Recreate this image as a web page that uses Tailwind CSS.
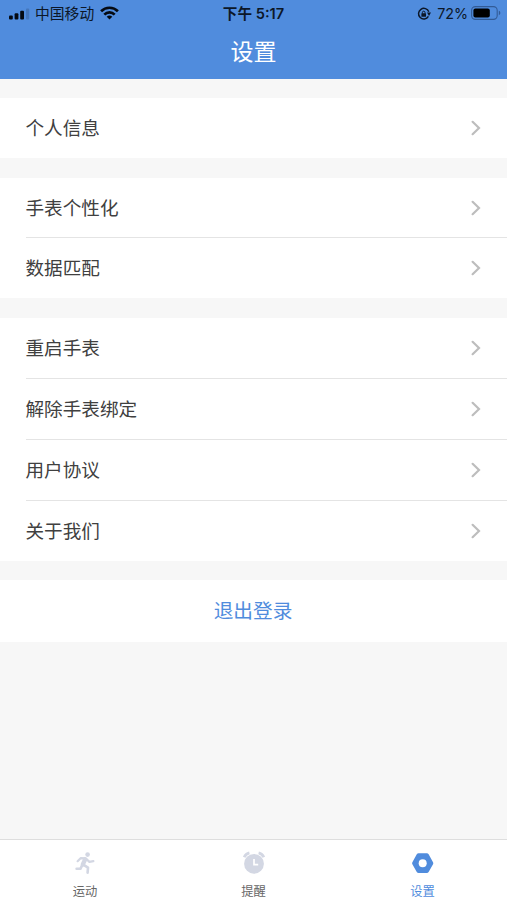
<!DOCTYPE html>
<html lang="zh-CN">
<head>
  <meta charset="UTF-8" />
  <meta name="viewport" content="width=device-width, initial-scale=1.0" />
  <title>设置</title>
  <script src="https://cdn.jsdelivr.net/npm/@tailwindcss/browser@4"></script>
</head>
<body class="bg-[#f7f7f7] font-['Inter','Noto_Sans_CJK_SC',sans-serif] text-[#404040]">
  <!-- Chevron shared by every row -->
  <svg class="hidden">
    <symbol id="chevron" viewBox="0 0 10 16">
      <path d="M1.6 1.8 8 8l-6.4 6.2" fill="none" stroke="#bdbdbd" stroke-width="2.2" stroke-linecap="round" />
    </symbol>
  </svg>

  <div class="flex flex-col h-[900px] overflow-hidden">
    <header class="h-[79px] shrink-0 bg-[#508cdd]">
      <!-- Status bar -->
      <div class="grid grid-cols-3 items-center h-[27px] text-[#0c1728] leading-none">
        <div class="flex items-center pl-[9px]">
          <svg class="mt-px w-[21px] h-3" viewBox="0 0 21 12">
            <rect x="0" y="7.5" width="3.8" height="4" rx="1" fill="#050a12" />
            <rect x="5.6" y="5.3" width="3.8" height="6.2" rx="1" fill="#050a12" />
            <rect x="11.2" y="2.8" width="3.8" height="8.7" rx="1" fill="#050a12" />
            <rect x="17" y="0.5" width="3.2" height="11" rx="1" fill="#4476bb" />
          </svg>
          <span class="ml-[5px] pt-[2px] text-[14.8px] whitespace-nowrap">中国移动</span>
          <svg class="ml-[6px] w-[19px] h-[14px]" viewBox="0 0 19 14" fill="none" stroke="#050a12" stroke-width="2.7">
            <path d="M1.1 5.2a12 12 0 0 1 16.8 0" />
            <path d="M4.3 8.6a7.4 7.4 0 0 1 10.4 0" />
            <path d="M9.5 13.6 6.7 10.8a4 4 0 0 1 5.6 0z" fill="#050a12" stroke="none" />
          </svg>
        </div>
        <div class="pt-[2px] text-center text-[14.6px] font-semibold whitespace-nowrap">下午 5:17</div>
        <div class="flex items-center justify-end pr-[6px]">
          <svg class="mt-px w-[14px] h-[14px]" viewBox="0 0 14 14" fill="none" stroke="#0c1728">
            <path d="M11.4 9.4A5.3 5.3 0 1 1 11.8 4.8" stroke-width="1.5" />
            <path d="M10 5.6h4l-2 3.4z" fill="#0c1728" stroke="none" />
            <path d="M5.4 6.6V5.5a1.3 1.3 0 0 1 2.6 0v1.1" stroke-width="1" />
            <rect x="4.4" y="6.2" width="4.6" height="3.6" rx=".5" fill="#0c1728" stroke="none" />
          </svg>
          <span class="ml-[6px] pt-px text-[14.3px]">72%</span>
          <svg class="ml-[3px] w-[30px] h-[14px]" viewBox="0 0 30 14">
            <rect x=".6" y=".6" width="25.6" height="12.8" rx="3.8" fill="none" stroke="#325b96" stroke-width="1.1" />
            <rect x="2.4" y="2.4" width="16.4" height="9.2" rx="2" fill="#000" />
            <path d="M27.8 4.8c2 .6 2 3.8 0 4.4z" fill="#325b96" />
          </svg>
        </div>
      </div>
      <h1 class="h-[49px] pt-px text-center text-[23px] leading-[49px] text-white">设置</h1>
    </header>

    <main class="flex-1 text-[18.6px]">
      <section class="mt-[19px] bg-white pl-[25.5px]">
        <a class="flex items-center justify-between h-[60px] pr-[26px]">
          <span class="pt-[2px]">个人信息</span>
          <svg class="w-[10px] h-4"><use href="#chevron" /></svg>
        </a>
      </section>

      <section class="mt-5 bg-white pl-[25.5px]">
        <a class="flex items-center justify-between h-[60px] pr-[26px] border-b border-[#e4e4e4]">
          <span class="pt-[2px]">手表个性化</span>
          <svg class="w-[10px] h-4"><use href="#chevron" /></svg>
        </a>
        <a class="flex items-center justify-between h-[60px] pr-[26px]">
          <span class="pt-[2px]">数据匹配</span>
          <svg class="w-[10px] h-4"><use href="#chevron" /></svg>
        </a>
      </section>

      <section class="mt-5 bg-white pl-[25.5px]">
        <a class="flex items-center justify-between h-[61px] pr-[26px] border-b border-[#e4e4e4]">
          <span class="pt-[2px]">重启手表</span>
          <svg class="w-[10px] h-4"><use href="#chevron" /></svg>
        </a>
        <a class="flex items-center justify-between h-[61px] pr-[26px] border-b border-[#e4e4e4]">
          <span class="pt-[2px]">解除手表绑定</span>
          <svg class="w-[10px] h-4"><use href="#chevron" /></svg>
        </a>
        <a class="flex items-center justify-between h-[61px] pr-[26px] border-b border-[#e4e4e4]">
          <span class="pt-[2px]">用户协议</span>
          <svg class="w-[10px] h-4"><use href="#chevron" /></svg>
        </a>
        <a class="flex items-center justify-between h-[60px] pr-[26px]">
          <span class="pt-[2px]">关于我们</span>
          <svg class="w-[10px] h-4"><use href="#chevron" /></svg>
        </a>
      </section>

      <button type="button" class="block mt-[19px] w-full h-[62px] pt-[2px] pr-px bg-white text-center text-[19.7px] text-[#508cdd]">退出登录</button>
    </main>

    <!-- Tab bar -->
    <nav class="grid grid-cols-3 h-[61px] shrink-0 border-t border-[#dedede] bg-white text-[12.3px] leading-none text-[#666]">
      <a class="flex flex-col items-center pt-[11px]">
        <svg class="w-6 h-6" viewBox="0 0 24 24" fill="none" stroke="#d3d7e3" stroke-width="2.6" stroke-linecap="round" stroke-linejoin="round">
          <circle cx="14.6" cy="3.6" r="2.3" fill="#d3d7e3" stroke="none" />
          <path d="M4.6 10.2 7.6 7.2l5 .1 3.8 3.6 4-.8" stroke-width="2.2" />
          <path d="M12.2 8.4 9.8 13.4" stroke-width="4.4" />
          <path d="M10.6 13.8l4.4 2.8-.4 5" stroke-width="2.6" />
          <path d="M9 14.6 7.4 17.8H3.6" stroke-width="2.6" />
        </svg>
        <span class="mt-[11px] pl-px">运动</span>
      </a>
      <a class="flex flex-col items-center pt-[11px]">
        <svg class="w-6 h-6" viewBox="0 0 24 24">
          <circle cx="12" cy="12.8" r="9.9" fill="#d3d7e3" />
          <path d="M2.2 6.2A7.5 7.5 0 0 1 7.4 1.9M21.8 6.2a7.5 7.5 0 0 0-5.2-4.3" fill="none" stroke="#d3d7e3" stroke-width="2.8" />
          <path d="M12 8v5.6h4.2" fill="none" stroke="#fff" stroke-width="1.7" />
        </svg>
        <span class="mt-[11px]">提醒</span>
      </a>
      <a class="flex flex-col items-center pt-[11px] text-[#508cdd]">
        <svg class="w-6 h-6" viewBox="0 0 24 24">
          <path d="M7.6 4.4h8.2l4.4 7.8-4.4 7.8H7.6l-4.4-7.8z" fill="#508cdd" stroke="#508cdd" stroke-width="4.2" stroke-linejoin="round" />
          <circle cx="11.7" cy="12.2" r="4" fill="#fff" />
        </svg>
        <span class="mt-[11px]">设置</span>
      </a>
    </nav>
  </div>
</body>
</html>
